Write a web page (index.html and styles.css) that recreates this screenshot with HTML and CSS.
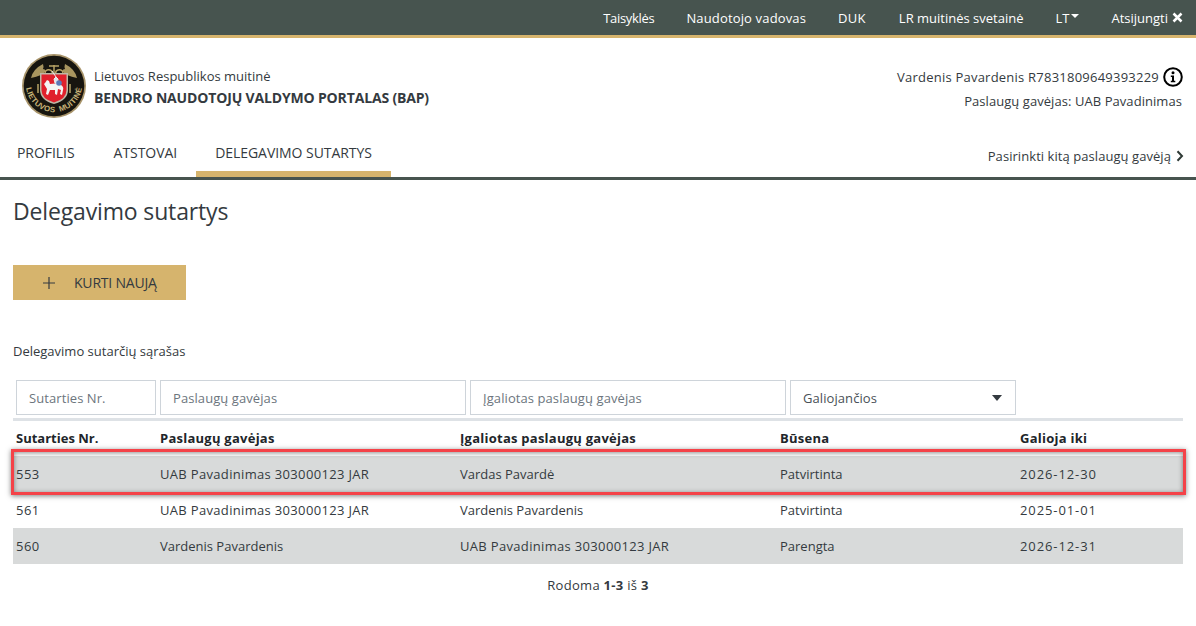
FILE: index.html
```html
<!DOCTYPE html>
<html lang="lt">
<head>
<meta charset="utf-8">
<title>Delegavimo sutartys</title>
<link rel="stylesheet" href="styles.css">
</head>
<body>
<nav class="topbar">
  <a class="t-rules">Taisyklės</a>
  <a class="t-guide">Naudotojo vadovas</a>
  <a class="t-faq">DUK</a>
  <a class="t-site">LR muitinės svetainė</a>
  <a class="lang">LT<span class="caret"></span></a>
  <a class="logout"><span>Atsijungti</span><svg class="x" viewBox="0 0 11 11" width="11" height="11"><path d="M1.500 1.500l8 8M9.500 1.500l-8 8" stroke="#fff" stroke-width="2.500" fill="none"/></svg></a>
</nav>
<header class="head">
  <div class="brand">
    <svg class="logo" viewBox="0 0 64 64" width="64" height="64">
      <circle cx="32" cy="32" r="32" fill="#a8946a"/>
      <circle cx="32" cy="32" r="30.300" fill="#17150f"/>
      <path d="M9 24q2-9 12-14q1 3 0 5q2 0 3 2q-4 5-15 7z" fill="#a8955f"/>
      <path d="M55 24q-2-9-12-14q-1 3 0 5q-2 0-3 2q4 5 15 7z" fill="#a8955f"/>
      <path d="M23 20q0-5 5-4q3 1 2 4M41 20q0-5-5-4q-3 1-2 4M32 11v8M27 12h10M16 30v9M48 30v9" stroke="#b8a265" stroke-width="1.500" fill="none"/>
      <path d="M18 19h28v17q0 10-14 14q-14-4-14-14z" fill="#bdb8a6"/>
      <path d="M19.500 20.500h25v15.500q0 9-12.500 12.500q-12.500-3.500-12.500-12.500z" fill="#e0202c"/>
      <path d="M23 29l2-3 2 1 1 3q5-1 9 0l2 1q3 2 2 5l-1 5-2-1 1-4-3-1-1 6-2-1 0-4h-5l-2 5-2-1 1-5-3-5z" fill="#f4f4f4"/>
      <path d="M33 29l-1-4 2-2 2 2 0 5zM34 23l-4-6" stroke="#eee" stroke-width="1" fill="#dfe3ea"/>
      <circle cx="37" cy="29" r="2.800" fill="#5b78b8"/>
      <path id="arc" d="M3.800 30a28.200 28.200 0 0 0 56.400 0" fill="none"/>
      <text class="logotext"><textPath href="#arc" startOffset="50%" text-anchor="middle">LIETUVOS  MUITINĖ</textPath></text>
    </svg>
    <div class="brandtext">
      <div class="org">Lietuvos Respublikos muitinė</div>
      <div class="portal">BENDRO NAUDOTOJŲ VALDYMO PORTALAS (BAP)</div>
    </div>
  </div>
  <div class="user">
    <div class="userline"><span>Vardenis Pavardenis R7831809649393229</span><svg class="info" viewBox="0 0 20 20" width="20" height="20"><circle cx="10" cy="10" r="8.800" fill="#fff" stroke="#000" stroke-width="2"/><circle cx="10" cy="5.800" r="1.500" fill="#000"/><path d="M7.800 8.500h3.200v5.300h1.300v1.400H7.800v-1.400h1.200V9.900H7.800z" fill="#000"/></svg></div>
    <div class="recipient">Paslaugų gavėjas: UAB Pavadinimas</div>
  </div>
</header>
<div class="tabs">
  <div class="tablist">
    <a class="tab">PROFILIS</a>
    <a class="tab">ATSTOVAI</a>
    <a class="tab active">DELEGAVIMO SUTARTYS</a>
  </div>
  <a class="switch"><span>Pasirinkti kitą paslaugų gavėją</span><svg viewBox="0 0 8 12" width="8" height="12"><path d="M1.500 1.200L6 6l-4.500 4.800" stroke="#2f3a36" stroke-width="2" fill="none"/></svg></a>
</div>
<main class="main">
  <h1>Delegavimo sutartys</h1>
  <button class="create"><svg class="plus" viewBox="0 0 12 12" width="12" height="12"><path d="M6 0v12M0 6h12" stroke="#343a40" stroke-width="1.200" fill="none"/></svg><span>KURTI NAUJĄ</span></button>
  <p class="listtitle">Delegavimo sutarčių sąrašas</p>
  <div class="filters">
    <div class="field f1">Sutarties Nr.</div>
    <div class="field f2">Paslaugų gavėjas</div>
    <div class="field f3">Įgaliotas paslaugų gavėjas</div>
    <div class="field f4"><span>Galiojančios</span><span class="selcaret"></span></div>
  </div>
  <div class="table">
    <div class="row headrow"><span class="h-first">Sutarties Nr.</span><span>Paslaugų gavėjas</span><span>Įgaliotas paslaugų gavėjas</span><span>Būsena</span><span>Galioja iki</span></div>
    <div class="row shade"><span class="id">553</span><span class="mixed">UAB Pavadinimas 303000123 JAR</span><span>Vardas Pavardė</span><span>Patvirtinta</span><span class="date">2026-12-30</span></div>
    <div class="row"><span class="id">561</span><span class="mixed">UAB Pavadinimas 303000123 JAR</span><span>Vardenis Pavardenis</span><span>Patvirtinta</span><span class="date">2025-01-01</span></div>
    <div class="row shade"><span class="id">560</span><span>Vardenis Pavardenis</span><span class="mixed">UAB Pavadinimas 303000123 JAR</span><span>Parengta</span><span class="date">2026-12-31</span></div>
    <div class="callout"></div>
  </div>
  <p class="count">Rodoma <b>1-3</b> iš <b>3</b></p>
</main>
</body>
</html>
```
FILE: styles.css
```css
* { box-sizing: border-box; }
html, body { margin: 0; padding: 0; }
body {
  width: 1196px;
  height: 626px;
  overflow: hidden;
  background: #fff;
  color: #343a40;
  font-family: "Open Sans", "Noto Sans", sans-serif;
  font-size: 13px;
}
.topbar {
  height: 38px;
  background: #47544f;
  border-bottom: 3px solid #d6b46d;
  display: flex;
  justify-content: flex-end;
  align-items: center;
  gap: 32px;
  padding-right: 13px;
  color: #fff;
}
.topbar a { display: flex; align-items: center; gap: 2px; }
.t-rules { letter-spacing: -0.3px; }
.t-guide { letter-spacing: .15px; }
.t-faq { letter-spacing: .3px; }
.t-site { margin-left: 1px; }
.caret {
  width: 0; height: 0;
  border-left: 4px solid transparent;
  border-right: 4px solid transparent;
  border-top: 4px solid #fff;
  margin-bottom: 3px;
}
.topbar .logout { gap: 4px; }
.head {
  height: 92px;
  display: flex;
  justify-content: space-between;
  padding: 16px 14px 0 22px;
}
.brand { display: flex; gap: 8px; align-items: flex-start; }
.logotext { font: 700 7.8px "Liberation Sans", sans-serif; fill: #c9b57a; letter-spacing: .3px; white-space: pre; }
.brandtext { padding-top: 13px; }
.org { line-height: 18px; }
.portal { font-size: 14px; font-weight: 700; line-height: 18px; margin-top: 4px; letter-spacing: -0.16px; }
.user { text-align: right; padding-top: 13px; }
.userline { display: flex; align-items: center; justify-content: flex-end; gap: 4px; height: 20px; letter-spacing: .23px; margin-right: -1px; }
.recipient { margin-top: 4px; line-height: 20px; letter-spacing: .06px; }
.tabs {
  height: 50px;
  border-bottom: 3px solid #47544f;
  display: flex;
  justify-content: space-between;
  align-items: flex-start;
  padding-right: 12px;
}
.tablist { display: flex; }
.tab {
  height: 47px;
  padding: 14px 19px 0;
  font-size: 14px;
  line-height: 18px;
  letter-spacing: -0.05px;
}
.tab:first-child { padding: 14px 20px 0 17px; }
.active { border-bottom: 6px solid #d6b46d; }
.switch { display: flex; align-items: center; gap: 5px; padding-top: 17px; letter-spacing: .06px; }
.main { padding: 0 13px; }
h1 {
  margin: 18px 0 0;
  font-size: 23px;
  font-weight: 400;
  line-height: 27px;
  letter-spacing: -0.15px;
}
.create {
  display: flex;
  align-items: center;
  gap: 19px;
  width: 173px;
  height: 35px;
  margin-top: 40px;
  padding: 0 0 0 30px;
  border: 0;
  background: #d6b46d;
  color: #343a40;
  font: inherit;
  font-size: 14px;
  letter-spacing: -0.2px;
}
.listtitle { margin: 41px 0 0; line-height: 20px; }
.filters {
  display: flex;
  gap: 4px;
  margin-top: 19px;
  padding: 0 0 3px 3px;
  height: 38px;
}
.field {
  height: 35px;
  border: 1px solid #ced4da;
  padding: 0 12px;
  display: flex;
  align-items: center;
  justify-content: space-between;
  color: #6c757d;
  letter-spacing: .08px;
}
.f1 { width: 140px; }
.f2 { width: 306px; }
.f3 { width: 316px; }
.f4 { width: 226px; color: #495057; }
.selcaret {
  width: 0; height: 0;
  border-left: 5.5px solid transparent;
  border-right: 5.5px solid transparent;
  border-top: 6px solid #343a40;
  margin-right: 1px;
}
.table { position: relative; width: 1170px; border-top: 3px solid #dee2e6; }
.row {
  display: grid;
  grid-template-columns: 144px 300px 320px 240px 1fr;
  height: 36px;
  align-items: center;
  padding-left: 3px;
}
.headrow { height: 35px; padding-bottom: 2px; font-weight: 700; color: #212529; letter-spacing: .25px; }
.headrow .h-first { letter-spacing: 0; }
.shade { background: #d8dada; }
.id { letter-spacing: .5px; }
.mixed { letter-spacing: .33px; }
.date { letter-spacing: .9px; }
.callout {
  position: absolute;
  left: -2px;
  top: 28px;
  width: 1175px;
  height: 46px;
  border: 3px solid #f44248;
  box-shadow: 0 1px 5px rgba(0, 0, 0, .5), inset 0 1px 5px rgba(0, 0, 0, .45);
}
.count { margin: 12px 0 0; text-align: center; line-height: 18px; letter-spacing: .3px; }
```
